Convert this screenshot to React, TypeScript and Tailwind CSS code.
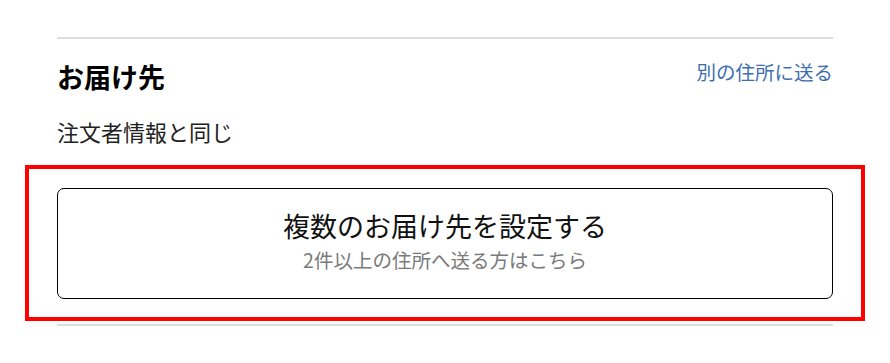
export default function App() {
  return (
    <div
      className="w-[890px] h-[363px] bg-white pt-[37px] text-[#111]"
      style={{ fontFamily: '"Noto Sans CJK JP", "Noto Sans", sans-serif' }}
    >
      {/* top divider */}
      <div className="mx-[57px] h-[2px] bg-[#dedede]" />

      {/* header */}
      <div className="mx-[57px] mt-[22px] flex items-start justify-between">
        <h2 className="text-[27px] leading-[32px] font-bold text-black">お届け先</h2>
        <a className="-mt-[3px] text-[19.5px] leading-[28px] text-[#3d6fb0]">別の住所に送る</a>
      </div>

      <p className="mx-[57px] mt-[24px] text-[22px] leading-[28px] text-[#222]">注文者情報と同じ</p>

      {/* highlighted area */}
      <div className="ml-[25px] mt-[20px] w-[840px] border-4 border-[#ff0000] px-[28px] pt-[19px] pb-[18px]">
        <button className="flex h-[111px] w-full flex-col items-center rounded-[7px] border-[1.5px] border-[#000] bg-white pt-[20px]">
          <span className="text-[27px] leading-[34px] text-[#111]">複数のお届け先を設定する</span>
          <span className="mt-[3px] text-[19.5px] leading-[28px] text-[#7a7a7a]">2件以上の住所へ送る方はこちら</span>
        </button>
      </div>

      {/* bottom divider */}
      <div className="mx-[57px] mt-[3px] h-[2px] bg-[#dedede]" />
    </div>
  );
}
